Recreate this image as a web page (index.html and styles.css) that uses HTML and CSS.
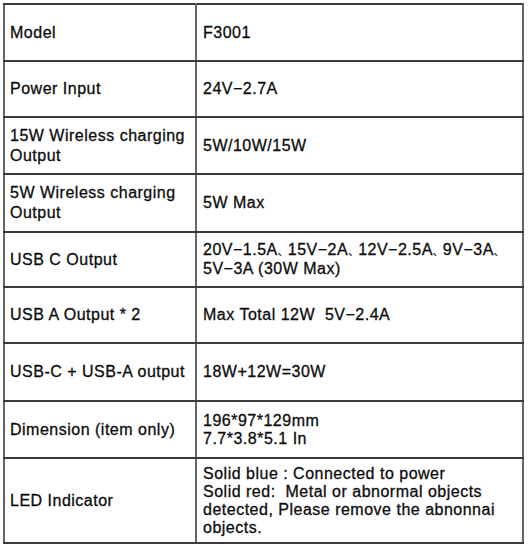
FILE: index.html
```html
<!DOCTYPE html>
<html>
<head>
<meta charset="utf-8">
<link rel="stylesheet" href="styles.css">
</head>
<body>
<table class="spec">
  <colgroup><col class="c-label"><col class="c-value"></colgroup>
  <tr class="r57"><td class="label">Model</td><td class="value">F3001</td></tr>
  <tr class="r56"><td class="label">Power Input</td><td class="value">24V−2.7A</td></tr>
  <tr class="r57"><td class="label">15W Wireless charging<br>Output</td><td class="value">5W/10W/15W</td></tr>
  <tr class="r58"><td class="label">5W Wireless charging<br>Output</td><td class="value">5W Max</td></tr>
  <tr class="r55"><td class="label">USB C Output</td><td class="value">20V−1.5A<span class="cm">、</span>15V−2A<span class="cm">、</span>12V−2.5A<span class="cm">、</span>9V−3A<span class="cm">、</span><br>5V−3A (30W Max)</td></tr>
  <tr class="r56"><td class="label">USB A Output * 2</td><td class="value">Max Total 12W&nbsp; 5V−2.4A</td></tr>
  <tr class="r58"><td class="label">USB-C + USB-A output</td><td class="value">18W+12W=30W</td></tr>
  <tr class="r57"><td class="label">Dimension (item only)</td><td class="value">196*97*129mm<br>7.7*3.8*5.1 In</td></tr>
  <tr class="r85"><td class="label">LED Indicator</td><td class="value">Solid blue : Connected to power<br>Solid red:&nbsp; Metal or abnormal objects<br>detected, Please remove the abnonnai<br>objects.</td></tr>
</table>
</body>
</html>
```
FILE: styles.css
```css
html, body {
  margin: 0;
  background: #ffffff;
}
body {
  padding: 3px 0 0 3px;
  font-family: "Liberation Sans", Arial, sans-serif;
  font-size: 16px;
  letter-spacing: 0.5px;
  color: #0c0c0c;
  -webkit-text-stroke: 0.3px #0c0c0c;
}
.spec {
  border-collapse: collapse;
  width: 521px;
  table-layout: fixed;
}
.c-label { width: 192px; }
.spec td {
  border-top: 2px solid #3a3a3a;
  border-bottom: 2px solid #3a3a3a;
  border-left: 2px solid #666666;
  border-right: 2px solid #666666;
  padding: 0;
  vertical-align: middle;
  white-space: nowrap;
}
.label {
  padding-left: 5px !important;
  line-height: 20px;
}
.value {
  padding-left: 6px !important;
  line-height: 18px;
}
.cm {
  font-family: "Noto Sans CJK SC", sans-serif;
  font-size: 10px;
  letter-spacing: 0;
}
.r55 { height: 55px; }
.r56 { height: 56px; }
.r57 { height: 57px; }
.r58 { height: 58px; }
.r85 { height: 85px; }
```
